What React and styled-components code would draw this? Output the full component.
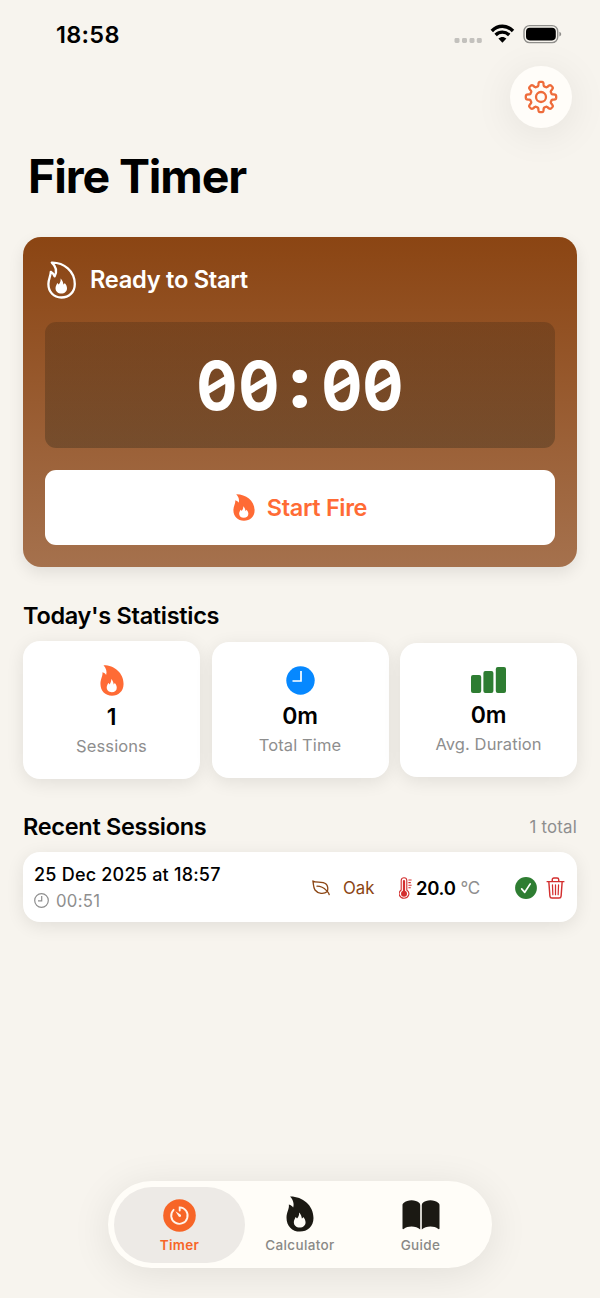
import React from "react";
import styled, { createGlobalStyle } from "styled-components";

const GlobalStyle = createGlobalStyle`
    * {
        box-sizing: border-box;
    }
    body {
        margin: 0;
        background-color: #f7f4ee;
        font-family: Inter, "Liberation Sans", sans-serif;
        color: #000;
    }
`;

const Screen = styled.div`
    width: 600px;
    height: 1298px;
    display: flex;
    flex-direction: column;
    background-color: #f7f4ee;
    overflow: hidden;
`;

const StatusBar = styled.div`
    height: 66px;
    display: flex;
    justify-content: space-between;
    padding: 21px 38px 0 56px;
`;

const Clock = styled.div`
    font-size: 23.5px;
    line-height: 28px;
    font-weight: 600;
    letter-spacing: 0.3px;
`;

const StatusIcons = styled.div`
    display: flex;
    align-items: flex-start;
    svg {
        display: block;
    }
`;

const Toolbar = styled.div`
    height: 62px;
    display: flex;
    justify-content: flex-end;
    padding-right: 28px;
`;

const RoundButton = styled.button`
    width: 62px;
    height: 62px;
    padding: 0;
    border: 0;
    border-radius: 50%;
    background-color: #fffdf9;
    box-shadow: 0 6px 40px rgba(0, 0, 0, 0.08);
    display: flex;
    align-items: center;
    justify-content: center;
`;

const Title = styled.h1`
    margin: 18px 0 0 28px;
    height: 60px;
    font-size: 46.5px;
    line-height: 60px;
    font-weight: 700;
    letter-spacing: -1.1px;
`;

const TimerCard = styled.section`
    margin: 31px 23px 0;
    height: 330px;
    padding: 22px;
    border-radius: 18px;
    background: linear-gradient(#8b4513, #a5714d);
    box-shadow: 0 6px 16px rgba(0, 0, 0, 0.09);
    display: flex;
    flex-direction: column;
`;

const TimerStatus = styled.div`
    height: 42px;
    display: flex;
    align-items: center;
    padding-left: 2px;
    gap: 14px;
    color: #fff;
    font-size: 23.7px;
    line-height: 30px;
    font-weight: 600;
    letter-spacing: -0.3px;
`;

const TimerDisplay = styled.div`
    margin-top: 21px;
    height: 126px;
    border-radius: 11px;
    background: linear-gradient(rgba(35, 25, 15, 0.22), rgba(10, 20, 12, 0.26));
    display: flex;
    align-items: center;
    justify-content: center;
`;

const Digit = styled.span`
    position: relative;
    width: 41.6px;
    display: flex;
    justify-content: center;
    color: #fff;
    font-size: 68px;
    line-height: 80px;
    font-weight: 750;
    transform: scaleX(0.89);

    /* slash inside the zero */
    &::after {
        content: "";
        position: absolute;
        left: 10px;
        right: 10px;
        top: 36px;
        height: 8px;
        background-color: #fff;
        transform: skewY(-28deg);
    }
`;

const Colon = styled.span`
    width: 41.6px;
    display: flex;
    justify-content: center;
    color: #fff;
    font-size: 68px;
    line-height: 80px;
    font-weight: 800;
    transform: translateY(-5px) scale(1.15, 1.06);
`;

const StartButton = styled.button`
    margin-top: 22px;
    height: 75px;
    padding: 0;
    border: 0;
    border-radius: 11px;
    background-color: #fff;
    color: #ff6b35;
    font-family: inherit;
    font-size: 23.5px;
    font-weight: 600;
    letter-spacing: -0.35px;
    display: flex;
    align-items: center;
    justify-content: center;
    gap: 12px;
`;

const SectionHead = styled.div`
    margin: ${(p) => p.$top} 23px 0;
    height: 30px;
    display: flex;
    align-items: center;
    justify-content: space-between;
`;

const SectionTitle = styled.h2`
    margin: 0;
    font-size: 23.5px;
    line-height: 30px;
    font-weight: 600;
    letter-spacing: -0.3px;
`;

const Total = styled.span`
    font-size: 16.8px;
    color: #8e8e8e;
    letter-spacing: 0.2px;
`;

const Stats = styled.div`
    margin: 10px 23px 0;
    height: 138px;
    display: grid;
    grid-template-columns: repeat(3, 1fr);
    gap: 11.5px;
    align-items: center;
`;

const StatCard = styled.div`
    height: ${(p) => p.$height}px;
    padding-top: 23px;
    border-radius: 17px;
    background-color: #fff;
    box-shadow: 0 4px 18px rgba(0, 0, 0, 0.09);
    display: flex;
    flex-direction: column;
    align-items: center;
`;

const StatIcon = styled.div`
    height: ${(p) => p.$height}px;
    display: flex;
    align-items: center;
`;

const StatValue = styled.div`
    margin-top: 6px;
    font-size: 23px;
    line-height: 30px;
    font-weight: 600;
    letter-spacing: -0.2px;
`;

const StatLabel = styled.div`
    margin-top: 3px;
    font-size: 16.5px;
    line-height: 22px;
    color: #8e8e8e;
    letter-spacing: 0.1px;
`;

const SessionRow = styled.div`
    margin: 10px 23px 0;
    height: 70px;
    padding: 1px 12px 0 11px;
    border-radius: 17px;
    background-color: #fff;
    box-shadow: 0 4px 18px rgba(0, 0, 0, 0.09);
    display: flex;
    align-items: center;
    svg {
        display: block;
        flex: none;
    }
`;

const SessionWhen = styled.div`
    width: 278px;
`;

const SessionDate = styled.div`
    font-size: 18px;
    line-height: 26px;
    font-weight: 500;
    letter-spacing: 0.22px;
    white-space: nowrap;
`;

const SessionLength = styled.div`
    display: flex;
    align-items: center;
    gap: 7px;
    font-size: 16.7px;
    line-height: 26px;
    color: #8e8e8e;
    letter-spacing: 0.3px;
`;

const Wood = styled.div`
    width: 86px;
    display: flex;
    align-items: center;
    gap: 12px;
    font-size: 16.8px;
    color: #8b4513;
`;

const Temperature = styled.div`
    width: 117px;
    padding-left: 1px;
    display: flex;
    align-items: center;
    font-size: 18.5px;
    font-weight: 600;
    letter-spacing: -0.3px;
`;

const Degrees = styled.span`
    margin-left: 3px;
`;

const Unit = styled.span`
    margin-left: 5px;
    font-size: 17px;
    font-weight: 400;
    color: #8e8e8e;
`;

const RowActions = styled.div`
    display: flex;
    align-items: center;
    gap: 9px;
`;

const TabBar = styled.nav`
    margin: auto auto 30px;
    width: 384px;
    height: 87px;
    padding: 6px;
    border-radius: 44px;
    background-color: #fffdf8;
    box-shadow: 0 6px 40px rgba(0, 0, 0, 0.09);
    display: flex;
`;

const Tab = styled.a`
    width: ${(p) => p.$width}px;
    height: 76px;
    padding-top: 9px;
    border-radius: 38px;
    background-color: ${(p) => (p.$active ? "#edeae6" : "transparent")};
    color: ${(p) => (p.$active ? "#f76527" : "#8a8986")};
    font-size: 13.5px;
    font-weight: ${(p) => (p.$active ? 600 : 500)};
    letter-spacing: 0.35px;
    display: flex;
    flex-direction: column;
    align-items: center;
`;

const TabIcon = styled.div`
    height: 38px;
    display: flex;
    align-items: ${(p) => p.$align || "center"};
`;

const TabLabel = styled.span`
    margin-top: 1px;
    line-height: 20px;
`;

const flameOuter =
    "M4 0.4C16 0.2 27 9 27 22C27 30.5 21 35.6 13.7 35.6C6 35.6 0.5 30 0.5 21.7C0.5 16 3.4 13 2.8 8.4C4.8 9 6.2 10 7 11.6C8.3 8 7 3.5 4 0.4Z";
const flameOutline =
    "M4 0.6C16 0.4 27 9 27 22C27 30.5 21 35.5 13.6 35.5C6 35.5 0.6 30 0.6 22C0.6 17 3 14 3 9.8C4.8 10.8 6 12.4 6.8 14.4C9.4 9.6 8.3 4.5 4 0.6Z";
const flameInner =
    "M12.8 16.4C14.4 18 15.5 20.2 15.6 22.6C16.2 22.2 16.6 21.6 16.9 20.9C18.4 22.4 19.2 24.4 19.2 26.3C19.2 29.5 16.9 31.6 13.5 31.6C10.1 31.6 7.7 29.3 7.7 26.2C7.7 24.1 8.9 22.7 9.4 21C10.1 21.4 10.5 21.9 10.8 22.6C12.4 20.9 13.1 18.7 12.8 16.4Z";

function Flame({ width, height, color }) {
    return (
        <svg width={width} height={height} viewBox="0 0 27.5 36" preserveAspectRatio="none">
            <path d={flameOuter + flameInner} fill={color} fillRule="evenodd" />
        </svg>
    );
}

function FlameOutline() {
    return (
        <svg width="29" height="38" viewBox="-0.8 -1 29 38">
            <path d={flameOutline} fill="none" stroke="#fff" strokeWidth="2.3" strokeLinejoin="round" />
            <path d={flameInner} fill="#fff" />
        </svg>
    );
}

// eight lobed cog, built from a wave turned round the centre
function Gear() {
    const points = [];
    for (let i = 0; i <= 240; i++) {
        const a = (i / 240) * Math.PI * 2;
        const wave = Math.cos(8 * a);
        const r = 13.1 + (2.1 * Math.tanh(2.6 * wave)) / Math.tanh(2.6);
        points.push(`${(17 + r * Math.sin(a)).toFixed(2)} ${(17 - r * Math.cos(a)).toFixed(2)}`);
    }
    return (
        <svg width="34" height="34" viewBox="0 0 34 34" fill="none" stroke="#ee6b3a" strokeWidth="2.3">
            <path d={`M${points.join("L")}Z`} strokeLinejoin="round" />
            <circle cx="17" cy="17" r="5" />
        </svg>
    );
}

function StatusGlyphs() {
    return (
        <svg width="108" height="23" viewBox="0 0 108 23">
            <g fill="#c3c1bd">
                <rect x="0.5" y="17" width="5" height="5" rx="1.4" />
                <rect x="8" y="17" width="5" height="5" rx="1.4" />
                <rect x="15.5" y="17" width="5" height="5" rx="1.4" />
                <rect x="22.8" y="17" width="5" height="5" rx="1.4" />
            </g>
            <g fill="none" stroke="#000" strokeWidth="3.4">
                <path d="M37.8 10C44 3.7 52.8 3.7 59 10" />
                <path d="M41.6 14C45.6 10.2 51.2 10.2 55.2 14" />
            </g>
            <path d="M44.4 17.6C46.8 15.5 50 15.5 52.4 17.6L48.4 21.7Z" fill="#000" />
            <rect x="70" y="4.6" width="33.7" height="17" rx="5.6" fill="none" stroke="#8f8e8b" strokeWidth="1.4" />
            <rect x="72" y="6.8" width="29.8" height="12.6" rx="3.8" fill="#000" />
            <path d="M105.4 10.8C107.8 11.8 107.8 14.6 105.4 15.5Z" fill="#8f8e8b" />
        </svg>
    );
}

function ClockSolid() {
    return (
        <svg width="29" height="29" viewBox="0 0 29 29">
            <circle cx="14.5" cy="14.5" r="14.2" fill="#0688ff" />
            <path d="M15 5V15H6.5" fill="none" stroke="#fff" strokeWidth="1.7" />
        </svg>
    );
}

function Bars() {
    return (
        <svg width="35" height="26" viewBox="0 0 35 26" fill="#2e7d32">
            <rect x="0" y="8" width="10.2" height="18" rx="2" />
            <rect x="12.4" y="4" width="10" height="22" rx="2" />
            <rect x="24.8" y="0" width="10.2" height="26" rx="2" />
        </svg>
    );
}

function ClockOutline() {
    return (
        <svg width="15" height="15" viewBox="0 0 15 15" fill="none" stroke="#8e8e8e" strokeWidth="1.2">
            <circle cx="7.5" cy="7.5" r="6.8" />
            <path d="M7.7 3V7.8H4" />
        </svg>
    );
}

function Leaf() {
    return (
        <svg width="19" height="16" viewBox="0 0 19 16" fill="none" stroke="#8b4513" strokeWidth="1.3" strokeLinecap="round" strokeLinejoin="round">
            <path d="M0.9 1C4 3.4 10.5 0.6 14 4C16 6 16.2 8.5 15.4 11.6C12 14.2 6 14 3 10C1.2 7.5 1.6 4 0.9 1Z" />
            <path d="M5 6.2C9 6.3 11.5 7.4 14.3 10.4C15.8 12 16.8 12.4 17.2 14.6" />
        </svg>
    );
}

function Thermometer() {
    return (
        <svg width="14" height="22" viewBox="0 0 14 22" fill="none" stroke="#d32f2f">
            <path d="M2.2 13V3.6C2.2 -0.2 7.8 -0.2 7.8 3.6V13C12 16.2 9.2 21.2 5 21.2C0.8 21.2 -2 16.2 2.2 13Z" strokeWidth="1.1" />
            <path d="M5 4V15" strokeWidth="2.2" strokeLinecap="round" />
            <circle cx="5" cy="16.7" r="3" fill="#d32f2f" stroke="none" />
            <path d="M9.4 3H12.6M9.4 5.6H11.8M9.4 8.2H12.6M9.4 10.8H11.8" strokeWidth="1.1" />
        </svg>
    );
}

function Done() {
    return (
        <svg width="22" height="22" viewBox="0 0 23 23">
            <circle cx="11.5" cy="11.5" r="11.4" fill="#2e7d32" />
            <path d="M7 12.4L10.2 16L15.9 7.2" fill="none" stroke="#fff" strokeWidth="1.8" strokeLinecap="round" strokeLinejoin="round" />
        </svg>
    );
}

function Trash() {
    return (
        <svg width="19" height="22" viewBox="0 0 20 23" fill="none" stroke="#d32f2f" strokeWidth="1.5" strokeLinecap="round" strokeLinejoin="round">
            <path d="M1.2 4.8H18.8M3 5L4.1 20C4.2 21.3 5 22 6.2 22H13.8C15 22 15.8 21.3 15.9 20L17 5M6.6 4.6V2.7C6.6 1.6 7.3 1 8.3 1H11.7C12.7 1 13.4 1.6 13.4 2.7V4.6" />
            <path d="M6.8 8.2L7.2 18.6M10 8.2V18.6M13.2 8.2L12.8 18.6" strokeWidth="1.3" />
        </svg>
    );
}

function TimerGlyph() {
    return (
        <svg width="33" height="33" viewBox="0 0 33 33">
            <circle cx="16.5" cy="16.5" r="16.3" fill="#f76527" />
            <path d="M16.7 11.5V8.4A8.2 8.2 0 1 1 10.6 10.8" fill="none" stroke="#fff4ec" strokeWidth="1.9" strokeLinecap="round" />
            <path d="M12.4 12.2L17.5 15.5C19 16.9 17.2 18.9 15.7 17.5Z" fill="#fff4ec" />
        </svg>
    );
}

function Book() {
    return (
        <svg width="38" height="30" viewBox="0 0 38 30" fill="#1b1913">
            <path d="M0.5 5.4C0.5 4.4 0.8 3.8 1.6 3.1C5.6 -0.6 13.6 -0.6 17.4 3.1C18 3.8 18.2 4.4 18.2 5.4V29.4C14.5 25.7 5.6 25.5 2 28.8C1.2 29.5 0.5 29.2 0.5 28.2Z" />
            <path d="M37.5 5.4C37.5 4.4 37.2 3.8 36.4 3.1C32.4 -0.6 24.4 -0.6 20.6 3.1C20 3.8 19.8 4.4 19.8 5.4V29.4C23.5 25.7 32.4 25.5 36 28.8C36.8 29.5 37.5 29.2 37.5 28.2Z" />
        </svg>
    );
}

function App() {
    return (
        <Screen>
            <GlobalStyle />
            <StatusBar>
                <Clock>18:58</Clock>
                <StatusIcons><StatusGlyphs /></StatusIcons>
            </StatusBar>
            <Toolbar>
                <RoundButton aria-label="Settings"><Gear /></RoundButton>
            </Toolbar>
            <Title>Fire Timer</Title>

            <TimerCard>
                <TimerStatus><FlameOutline />Ready to Start</TimerStatus>
                <TimerDisplay>
                    <Digit>0</Digit>
                    <Digit>0</Digit>
                    <Colon>:</Colon>
                    <Digit>0</Digit>
                    <Digit>0</Digit>
                </TimerDisplay>
                <StartButton><Flame width={22} height={27} color="#ff6b35" />Start Fire</StartButton>
            </TimerCard>

            <SectionHead $top="34px">
                <SectionTitle>Today's Statistics</SectionTitle>
            </SectionHead>
            <Stats>
                <StatCard $height={138}>
                    <StatIcon $height={32}><Flame width={24} height={31} color="#ff6b35" /></StatIcon>
                    <StatValue>1</StatValue>
                    <StatLabel>Sessions</StatLabel>
                </StatCard>
                <StatCard $height={136}>
                    <StatIcon $height={30}><ClockSolid /></StatIcon>
                    <StatValue>0m</StatValue>
                    <StatLabel>Total Time</StatLabel>
                </StatCard>
                <StatCard $height={134}>
                    <StatIcon $height={28}><Bars /></StatIcon>
                    <StatValue>0m</StatValue>
                    <StatLabel>Avg. Duration</StatLabel>
                </StatCard>
            </Stats>

            <SectionHead $top="33px">
                <SectionTitle>Recent Sessions</SectionTitle>
                <Total>1 total</Total>
            </SectionHead>
            <SessionRow>
                <SessionWhen>
                    <SessionDate>25 Dec 2025 at 18:57</SessionDate>
                    <SessionLength><ClockOutline />00:51</SessionLength>
                </SessionWhen>
                <Wood><Leaf />Oak</Wood>
                <Temperature><Thermometer /><Degrees>20.0</Degrees><Unit>°C</Unit></Temperature>
                <RowActions><Done /><Trash /></RowActions>
            </SessionRow>

            <TabBar>
                <Tab $width={131} $active>
                    <TabIcon><TimerGlyph /></TabIcon>
                    <TabLabel>Timer</TabLabel>
                </Tab>
                <Tab $width={110}>
                    <TabIcon $align="flex-start"><Flame width={28} height={36} color="#1b1913" /></TabIcon>
                    <TabLabel>Calculator</TabLabel>
                </Tab>
                <Tab $width={131}>
                    <TabIcon><Book /></TabIcon>
                    <TabLabel>Guide</TabLabel>
                </Tab>
            </TabBar>
        </Screen>
    );
}

export default App;
